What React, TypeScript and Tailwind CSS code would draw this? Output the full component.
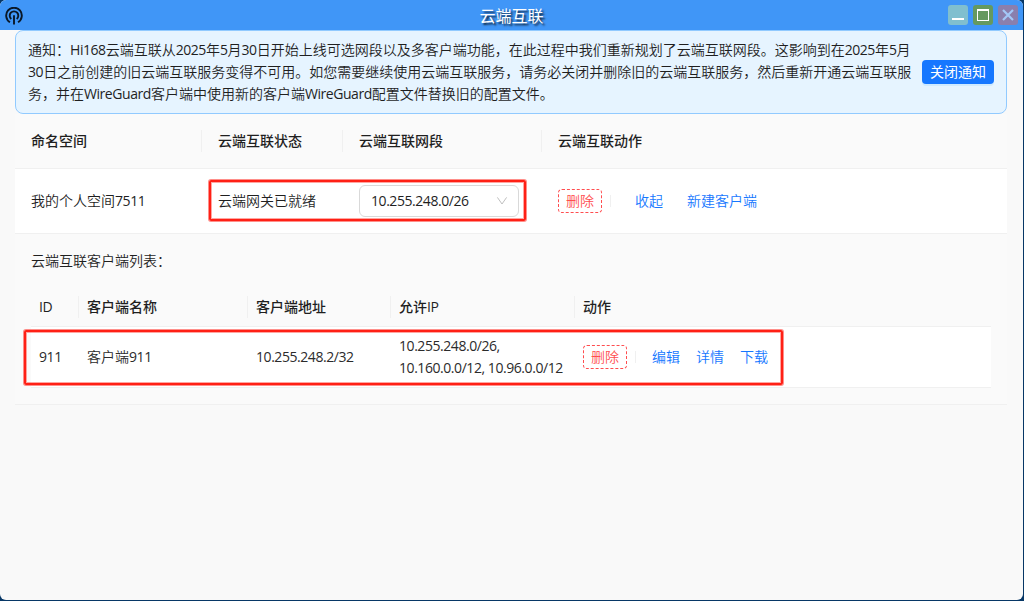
import type { ReactNode } from "react";

function L({ children }: { children: ReactNode }) {
  return <span className="text-[14px] font-normal tracking-[-0.44px]">{children}</span>;
}

function TitleBar() {
  return (
    <header className="grid h-[30px] grid-cols-[1fr_auto_1fr] items-center bg-[#4096f7]">
      <svg className="ml-[5px] mt-px size-[18px]" viewBox="0 0 18 18" fill="none" stroke="#0a1828" strokeWidth="1.9">
        <path d="M5 15.2A7.8 7.8 0 1 1 13 15.2" />
        <path d="M6.3 12A4.3 4.3 0 1 1 11.7 12" />
        <path d="M9 8.2V17.6" />
      </svg>
      <h1 className="mt-0.5 text-[16px] leading-[24px] font-normal text-white [text-shadow:2px_2px_2px_rgba(0,0,0,0.75)]">云端互联</h1>
      <div className="mr-[5px] flex gap-[5px] justify-self-end">
        <svg className="h-5 w-5 rounded-[3px] bg-[#80bfcf]" viewBox="0 0 20 20">
          <path d="M4 14H16" stroke="#fff" strokeWidth="2" />
        </svg>
        <svg className="h-5 w-5 rounded-[3px] bg-[#65995f]" viewBox="0 0 20 20">
          <path d="M4 4H16V16H4Z M5 6V15H15V6Z" fill="#fff" fillRule="evenodd" />
        </svg>
        <svg className="h-5 w-5 rounded-[3px] bg-[#8a7fad]" viewBox="0 0 20 20">
          <path d="M5 5L15 15M15 5L5 15" stroke="#a3c8f7" strokeWidth="2.2" />
        </svg>
      </div>
    </header>
  );
}

function Notice() {
  return (
    <section className="flex h-[84px] items-center rounded-lg border border-[#91caff] bg-[#e6f4ff] pr-3 pl-3">
      <div className="flex-1 whitespace-nowrap">
        <p>通知：<L>Hi168</L>云端互联从<L>2025</L>年<L>5</L>月<L>30</L>日开始上线可选网段以及多客户端功能，在此过程中我们重新规划了云端互联网段。这影响到在<L>2025</L>年<L>5</L>月</p>
        <p><L>30</L>日之前创建的旧云端互联服务变得不可用。如您需要继续使用云端互联服务，请务必关闭并删除旧的云端互联服务，然后重新开通云端互联服</p>
        <p>务，并在<L>WireGuard</L>客户端中使用新的客户端<L>WireGuard</L>配置文件替换旧的配置文件。</p>
      </div>
      <button className="h-6 w-[72px] shrink-0 rounded bg-[#1677ff] font-normal text-white shadow-[0_2px_0_rgba(5,145,255,0.1)]">关闭通知</button>
    </section>
  );
}

function HeadCell({ children, small = false, last = false }: { children: ReactNode; small?: boolean; last?: boolean }) {
  return (
    <div className={`flex h-[22px] items-center font-medium text-[#1f1f1f] ${small ? "pl-2" : "pl-4"} ${last ? "" : "border-r border-[#f0f0f0]"}`}>
      {children}
    </div>
  );
}

function DeleteButton() {
  return <button className="h-6 w-11 rounded border border-dashed border-[#ff4d4f] bg-white text-[#ff4d4f]">删除</button>;
}

function Link({ children }: { children: ReactNode }) {
  return <a className="text-[#1677ff]">{children}</a>;
}

function ClientTable() {
  return (
    <div className="mx-4">
      <div className="grid h-[39px] grid-cols-[48px_169px_143px_184px_1fr] items-center border-b border-[#f0f0f0]">
        <HeadCell small><span className="tracking-[-0.4px]">ID</span></HeadCell>
        <HeadCell small>客户端名称</HeadCell>
        <HeadCell small>客户端地址</HeadCell>
        <HeadCell small>允许<span className="tracking-[-0.4px]">IP</span></HeadCell>
        <HeadCell small last>动作</HeadCell>
      </div>
      <div className="relative grid h-[61px] grid-cols-[48px_169px_143px_184px_1fr] items-center border-b border-[#f0f0f0] bg-white text-[#2b2b2b]">
        <div className="pl-2"><L>911</L></div>
        <div className="pl-2">客户端<L>911</L></div>
        <div className="pl-2"><L>10.255.248.2/32</L></div>
        <div className="pl-2 whitespace-nowrap"><p><L>10.255.248.0/26,</L></p><p><L>10.160.0.0/12, 10.96.0.0/12</L></p></div>
        <div className="flex items-center pl-2">
          <DeleteButton />
          <span className="mr-4 ml-2 h-3 w-px bg-[#f0f0f0]" />
          <div className="flex gap-4"><Link>编辑</Link><Link>详情</Link><Link>下载</Link></div>
        </div>
        <div className="absolute top-[3px] -left-[7px] h-[55px] w-[759px] rounded-[2px] border-2 border-[#ff2015] shadow-[0_0_0_1px_rgba(255,32,21,0.5),inset_0_0_0_1px_rgba(255,32,21,0.4)]" />
      </div>
    </div>
  );
}

export default function App() {
  return (
    <div className="h-[601px] w-[1024px] overflow-hidden bg-[#073766] pr-px pb-px font-['Open_Sans','Noto_Sans_CJK_SC',sans-serif] text-[14px] leading-[22px] font-[350] text-[#1f1f1f]">
      <div className="h-[600px] overflow-hidden rounded-md bg-[#f9f9f9]">
        <TitleBar />
        <main className="mr-4 ml-[15px]">
          <Notice />
          <div className="grid h-[55px] grid-cols-[187px_141px_199px_1fr] items-center border-b border-[#f0f0f0] bg-[#fafafa]">
            <HeadCell>命名空间</HeadCell>
            <HeadCell>云端互联状态</HeadCell>
            <HeadCell>云端互联网段</HeadCell>
            <HeadCell last>云端互联动作</HeadCell>
          </div>
          <div className="relative grid h-[65px] grid-cols-[187px_141px_199px_1fr] items-center border-b border-[#f0f0f0] bg-white">
            <div className="pl-4">我的个人空间<L>7511</L></div>
            <div className="pl-4">云端网关已就绪</div>
            <div className="pl-4">
              <div className="flex h-8 w-[160px] items-center justify-between rounded-md border border-[#d9d9d9] bg-white pr-[10px] pl-[11px]">
                <L>10.255.248.0/26</L>
                <svg className="h-3 w-3" viewBox="0 0 12 12" fill="none" stroke="#bfbfbf">
                  <path d="M1.4 2.4L6 9L10.6 2.4" />
                </svg>
              </div>
            </div>
            <div className="flex items-center pl-4">
              <DeleteButton />
              <span className="mr-6 ml-2 h-3 w-px bg-[#f0f0f0]" />
              <div className="flex gap-6"><Link>收起</Link><Link>新建客户端</Link></div>
            </div>
            <div className="absolute top-[11px] left-[194px] h-[41px] w-[317px] rounded-[2px] border-2 border-[#ff2015] shadow-[0_0_0_1px_rgba(255,32,21,0.5),inset_0_0_0_1px_rgba(255,32,21,0.4)]" />
          </div>
          <section className="h-[171px] border-b border-[#f0f0f0] bg-[#fafafa]">
            <div className="flex h-[54px] items-center pl-4">云端互联客户端列表：</div>
            <ClientTable />
          </section>
        </main>
      </div>
    </div>
  );
}
